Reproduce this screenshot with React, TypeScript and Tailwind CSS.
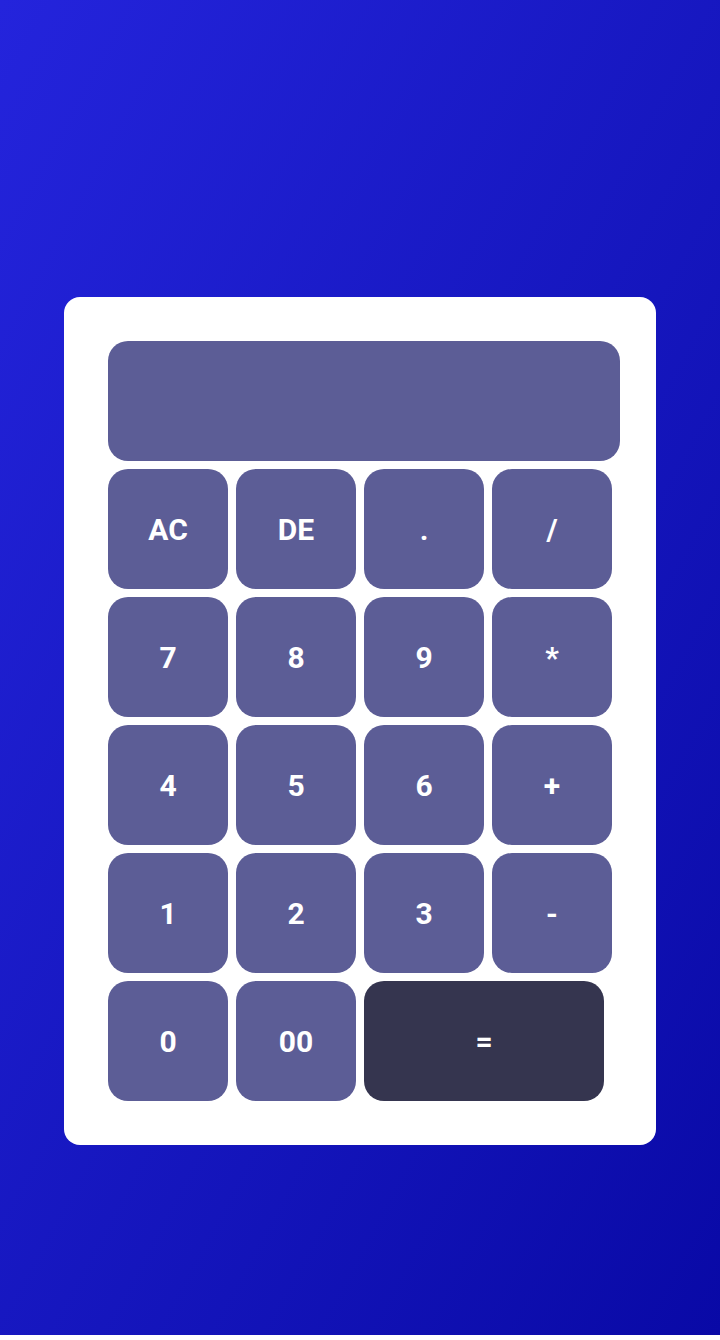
import React from "react";

const keys = [
  ["AC", "DE", ".", "/"],
  ["7", "8", "9", "*"],
  ["4", "5", "6", "+"],
  ["1", "2", "3", "-"],
];

export default function App() {
  return (
    <div className="w-full bg-white">
      <div
        className="h-[1335px] w-full bg-gradient-to-br from-[#2424dc] to-[#0909a6] pt-[297px] flex justify-center items-start"
        style={{ fontFamily: "Roboto, 'Liberation Sans', sans-serif" }}
      >
        <div className="w-[592px] bg-white rounded-[16px] p-[44px] flex flex-col gap-2">
          <div className="h-[120px] w-[512px] bg-[#5c5d96] rounded-[20px]" />
          {keys.map((row, i) => (
            <div key={i} className="flex gap-2">
              {row.map((k) => (
                <button
                  key={k}
                  className="w-[120px] h-[120px] rounded-[20px] bg-[#5c5d96] text-white font-bold text-[30px] flex items-center justify-center"
                >
                  {k}
                </button>
              ))}
            </div>
          ))}
          <div className="flex gap-2">
            <button className="w-[120px] h-[120px] rounded-[20px] bg-[#5c5d96] text-white font-bold text-[30px] flex items-center justify-center">
              0
            </button>
            <button className="w-[120px] h-[120px] rounded-[20px] bg-[#5c5d96] text-white font-bold text-[30px] flex items-center justify-center">
              00
            </button>
            <button className="w-[240px] h-[120px] rounded-[20px] bg-[#35354f] text-white font-bold text-[30px] flex items-center justify-center">
              =
            </button>
          </div>
        </div>
      </div>
    </div>
  );
}
